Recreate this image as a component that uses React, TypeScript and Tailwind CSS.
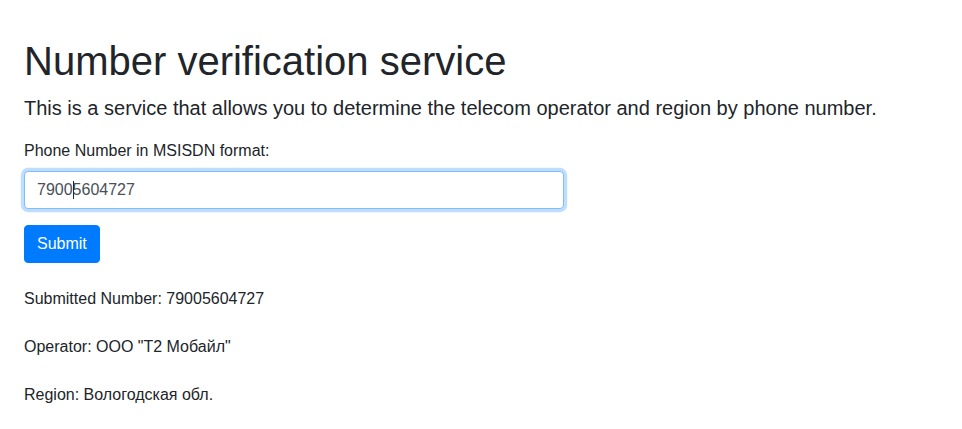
import React from "react";

export default function App() {
  return (
    <div className="min-h-screen bg-white px-6 pt-[37px] font-['Liberation_Sans',Arial,sans-serif] text-[#212529]">
      <h1 className="text-[40px] leading-[48px] mb-2 font-normal">Number verification service</h1>
      <p className="text-[20px] leading-[30px] mb-4">
        This is a service that allows you to determine the telecom operator and region by phone number.
      </p>

      <form className="mb-6" onSubmit={(e) => e.preventDefault()}>
        <div className="mb-4">
          <label htmlFor="msisdn" className="inline-block text-base leading-6 mb-2">
            Phone Number in MSISDN format:
          </label>
          <div className="relative w-[540px]">
            <input
              id="msisdn"
              type="text"
              defaultValue="79005604727"
              className="block w-full h-[38px] px-3 py-1.5 text-base leading-6 text-[#495057] bg-white border border-[#80bdff] rounded outline-none shadow-[0_0_0_3.2px_rgba(0,123,255,0.25)]"
            />
            <span className="absolute left-[48.5px] top-[10px] h-[18px] w-px bg-[#212529]" />
          </div>
        </div>
        <button
          type="submit"
          className="h-[38px] px-3 text-base leading-6 text-white bg-[#007bff] border border-[#007bff] rounded"
        >
          Submit
        </button>
      </form>

      <div className="flex flex-col gap-6 text-base leading-6">
        <p>Submitted Number: 79005604727</p>
        <p>Operator: ООО "Т2 Мобайл"</p>
        <p>Region: Вологодская обл.</p>
      </div>
    </div>
  );
}
